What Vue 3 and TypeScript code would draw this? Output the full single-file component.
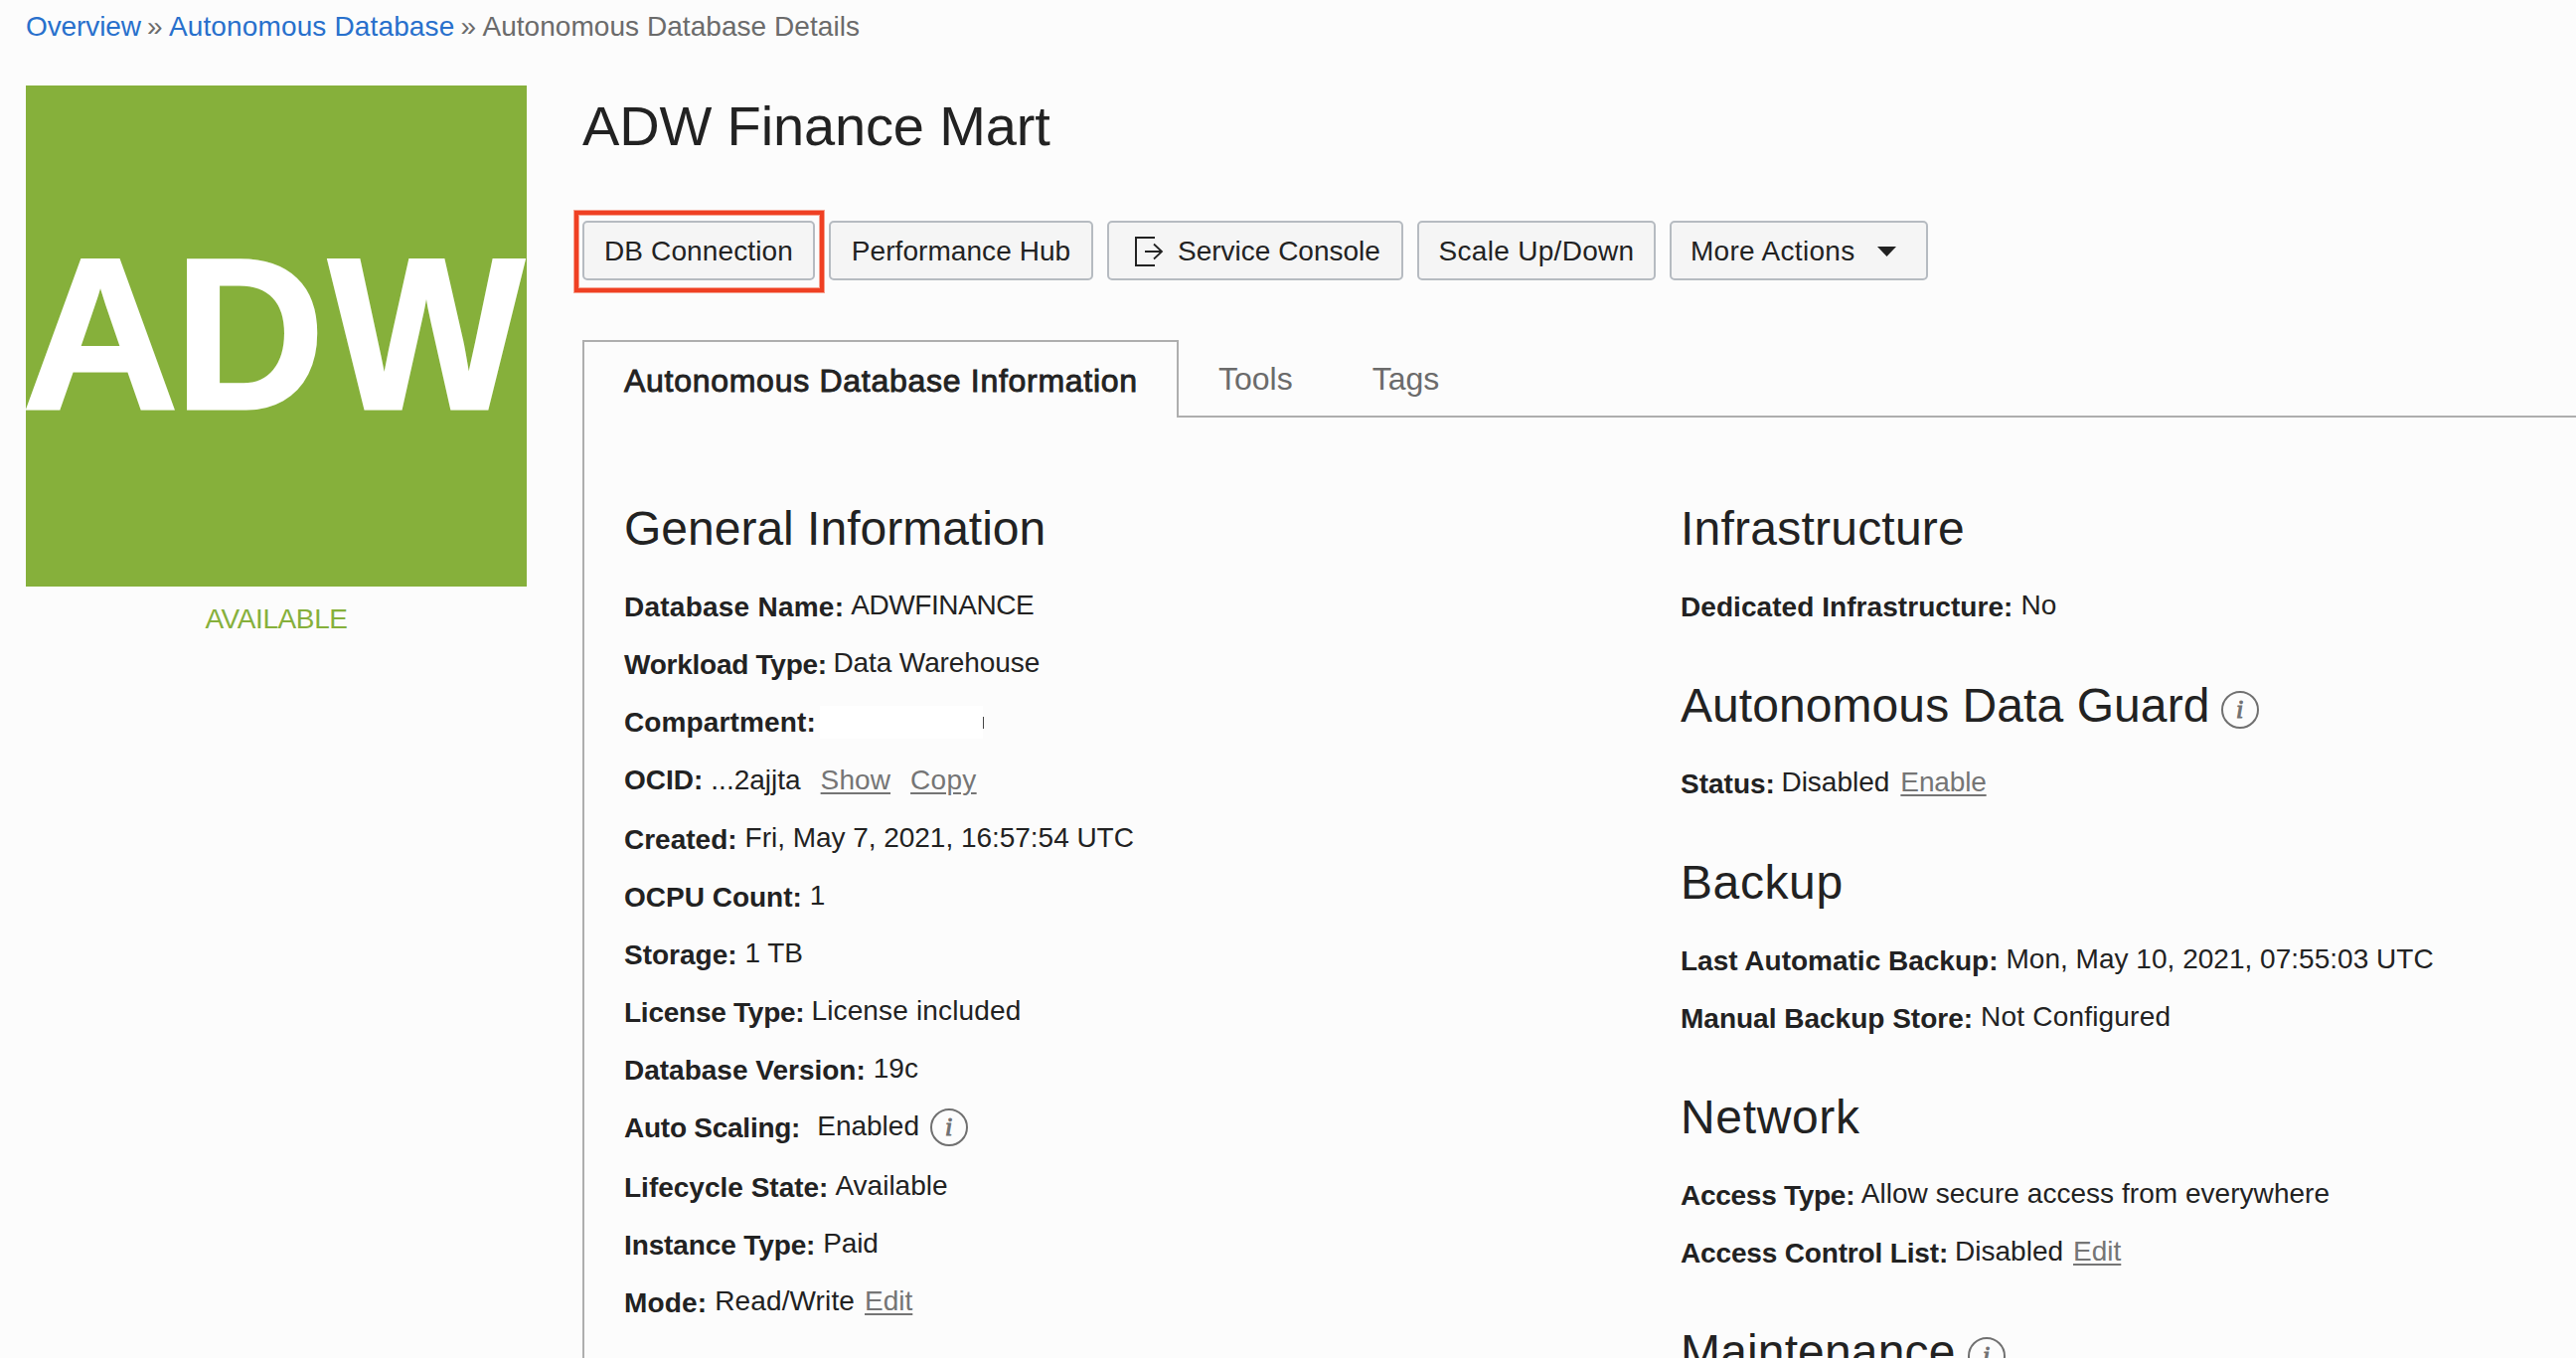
<script setup lang="ts">
interface Link {
  text: string
  gap: number
  ls?: number
}
interface Row {
  label: string
  value?: string
  labelLs?: number
  valueLs?: number
  gap?: number
  links?: Link[]
  info?: boolean
  tall?: boolean
  level?: boolean
  masked?: boolean
}
interface Section {
  title: string
  titleLs?: number
  info?: boolean
  rows: Row[]
}

const columns: Section[][] = [
  [
    {
      title: 'General Information',
      rows: [
        { label: 'Database Name:', labelLs: 0.24, value: 'ADWFINANCE', valueLs: -0.42, gap: 7 },
        { label: 'Workload Type:', labelLs: -0.25, value: 'Data Warehouse', valueLs: -0.1, gap: 6.5 },
        { label: 'Compartment:', labelLs: 0.13, masked: true },
        {
          label: 'OCID:',
          value: '...2ajjta',
          level: true,
          tall: true,
          links: [{ text: 'Show', gap: 20, ls: 0.1 }, { text: 'Copy', gap: 20, ls: 0.3 }],
        },
        { label: 'Created:', value: 'Fri, May 7, 2021, 16:57:54 UTC', valueLs: -0.03 },
        { label: 'OCPU Count:', value: '1' },
        { label: 'Storage:', value: '1 TB', valueLs: -0.1 },
        { label: 'License Type:', labelLs: -0.25, value: 'License included', valueLs: 0.15, gap: 7 },
        { label: 'Database Version:', value: '19c' },
        { label: 'Auto Scaling:', labelLs: -0.25, value: 'Enabled', gap: 17, info: true, tall: true },
        { label: 'Lifecycle State:', value: 'Available', gap: 7 },
        { label: 'Instance Type:', labelLs: -0.12, value: 'Paid', valueLs: -0.2 },
        { label: 'Mode:', labelLs: 0.15, value: 'Read/Write', valueLs: 0.13, links: [{ text: 'Edit', gap: 10 }] },
      ],
    },
  ],
  [
    {
      title: 'Infrastructure',
      titleLs: 0.23,
      rows: [{ label: 'Dedicated Infrastructure:', labelLs: 0.06, value: 'No' }],
    },
    {
      title: 'Autonomous Data Guard',
      titleLs: 0.07,
      info: true,
      rows: [{ label: 'Status:', value: 'Disabled', gap: 6.5, links: [{ text: 'Enable', gap: 11, ls: -0.15 }] }],
    },
    {
      title: 'Backup',
      titleLs: 0.6,
      rows: [
        { label: 'Last Automatic Backup:', value: 'Mon, May 10, 2021, 07:55:03 UTC', valueLs: 0.02 },
        { label: 'Manual Backup Store:', value: 'Not Configured', valueLs: 0.2 },
      ],
    },
    {
      title: 'Network',
      titleLs: 0.65,
      rows: [
        {
          label: 'Access Type:',
          labelLs: -0.27,
          value: 'Allow secure access from everywhere',
          valueLs: 0.04,
          gap: 6.5,
        },
        { label: 'Access Control List:', labelLs: -0.16, value: 'Disabled', gap: 7, links: [{ text: 'Edit', gap: 10 }] },
      ],
    },
    { title: 'Maintenance', titleLs: 0.15, info: true, rows: [] },
  ],
]

const px = (n?: number) => (n ? `${n}px` : undefined)
</script>

<template>
  <div class="page">
    <nav class="crumbs">
      <a class="c1">Overview</a><i>»</i><a class="c2">Autonomous Database</a><i>»</i><span>Autonomous Database Details</span>
    </nav>
    <div class="body">
      <aside class="side">
        <svg class="tile" viewBox="0 0 504 504" width="504" height="504">
          <text x="-3.5" y="325" textLength="157" lengthAdjust="spacingAndGlyphs">A</text>
          <text x="149.5" y="325" textLength="151" lengthAdjust="spacingAndGlyphs">D</text>
          <text x="304.5" y="325" textLength="197" lengthAdjust="spacingAndGlyphs">W</text>
        </svg>
        <div class="state">AVAILABLE</div>
      </aside>
      <main class="main">
        <h1>ADW Finance Mart</h1>
        <div class="actions">
          <button class="b1"><span>DB Connection</span></button>
          <button class="b2"><span>Performance Hub</span></button>
          <button class="b3">
            <svg width="30" height="30" viewBox="0 0 30 30" fill="none" stroke="#222" stroke-width="2">
              <path d="M20 1H1V29H20" /><path d="M10 15H27" /><path d="M19 7.5L27 15L19 22.5" stroke-width="1.8" />
            </svg>
            <span>Service Console</span>
          </button>
          <button class="b4"><span>Scale Up/Down</span></button>
          <button class="b5">
            <span>More Actions</span>
            <svg width="19" height="10" viewBox="0 0 19 10"><path d="M0 0H19L9.5 10Z" fill="#222" /></svg>
          </button>
        </div>
        <div class="tabs">
          <div class="tab active"><span>Autonomous Database Information</span></div>
          <div class="rest">
            <span class="tab tools">Tools</span>
            <span class="tab tags">Tags</span>
          </div>
        </div>
        <div class="panel">
          <div v-for="(col, c) in columns" :key="c" class="col">
            <section v-for="s in col" :key="s.title">
              <h2>
                <span :style="{ letterSpacing: px(s.titleLs) }">{{ s.title }}</span>
                <svg v-if="s.info" class="info" width="38" height="38" viewBox="0 0 38 38">
                  <circle cx="19" cy="19" r="18" /><text x="18.5" y="27" text-anchor="middle">i</text>
                </svg>
              </h2>
              <div v-for="r in s.rows" :key="r.label" class="row" :class="{ tall: r.tall, level: r.level }">
                <b :style="{ letterSpacing: px(r.labelLs) }">{{ r.label }}</b>
                <span v-if="r.masked" class="mask"></span>
                <span v-else class="val" :style="{ marginLeft: px(r.gap), letterSpacing: px(r.valueLs) }">{{ r.value }}</span>
                <a
                  v-for="l in r.links"
                  :key="l.text"
                  :style="{ marginLeft: px(l.gap), letterSpacing: px(l.ls) }"
                >{{ l.text }}</a>
                <svg v-if="r.info" class="info" width="38" height="38" viewBox="0 0 38 38">
                  <circle cx="19" cy="19" r="18" /><text x="18.5" y="27" text-anchor="middle">i</text>
                </svg>
              </div>
            </section>
          </div>
        </div>
      </main>
    </div>
  </div>
</template>

<style>
html, body { background: #fcfcfc; overflow: hidden; }
</style>
<style scoped>
.page {
  width: 2592px;
  height: 1366px;
  overflow: hidden;
  background: #fcfcfc;
  color: #222;
  font: 28px/32px "Liberation Sans", Arial, sans-serif;
  white-space: nowrap;
}
.crumbs { display: flex; height: 86px; padding: 11px 0 0 26px; box-sizing: border-box; color: #6b6b6b; letter-spacing: 0.05px; }
.crumbs a { color: #2870cc; }
.crumbs .c1 { letter-spacing: -0.1px; }
.crumbs .c2 { letter-spacing: 0.14px; }
.crumbs i { font-style: normal; width: 28px; text-align: center; }
.body { display: flex; }
.side { width: 504px; margin-left: 26px; flex: none; }
.tile { display: block; background: #86b03b; overflow: visible; }
.tile text { font: bold 217px "Liberation Sans", Arial, sans-serif; fill: #fff; stroke: #fff; stroke-width: 3; }
.state { color: #86b03b; text-align: center; margin-top: 17px; letter-spacing: -0.4px; }
.main { margin-left: 56px; flex: 1; }
h1 { font-size: 56px; font-weight: 400; line-height: 64px; margin: 9px 0 63px; height: 64px; letter-spacing: -0.15px; }
.actions { display: flex; height: 60px; }
button {
  box-sizing: border-box;
  height: 60px;
  padding: 0;
  border: 2px solid #b6bbc1;
  border-radius: 5px;
  background: #f5f5f5;
  color: #222;
  font: inherit;
  display: flex;
  align-items: center;
  justify-content: center;
  margin-right: 14px;
}
button span { padding-top: 2px; }
.b1 { width: 234px; position: relative; letter-spacing: 0.13px; }
.b1::after {
  content: "";
  position: absolute;
  left: -10px;
  top: -12px;
  width: 243px;
  height: 74px;
  border: 4px solid #ef4023;
  box-shadow: 0 0 0 1px #f6a08f, inset 0 0 0 1px #f6a08f;
}
.b2 { width: 266px; letter-spacing: 0.07px; }
.b3 { width: 298px; gap: 13px; justify-content: flex-start; padding-left: 26px; }
.b3 svg { margin-top: 2px; }
.b4 { width: 240px; letter-spacing: 0.3px; }
.b5 { width: 260px; justify-content: space-between; padding: 0 30px 0 19px; letter-spacing: 0.3px; }
.b5 svg { margin-top: 2px; }
.tabs { display: flex; margin-top: 60px; height: 78px; font-size: 32px; line-height: 36px; }
.tab.active {
  box-sizing: border-box;
  width: 600px;
  border: 2px solid #aeaeae;
  border-bottom: 0;
  padding: 21px 0 0 40px;
  letter-spacing: 0.72px;
  -webkit-text-stroke: 0.9px #222;
}
.rest { flex: 1; border-bottom: 2px solid #aeaeae; color: #6b6b6b; padding: 21px 0 0 40px; display: flex; }
.tags { margin-left: 80px; }
.panel { border-left: 2px solid #aeaeae; display: flex; height: 946px; padding: 85px 0 0 40px; box-sizing: border-box; }
.col { width: 1063px; flex: none; }
h2 { font-size: 48px; font-weight: 400; line-height: 54px; height: 54px; margin: 0 0 34px; display: flex; }
h2 .info { margin: 12px 0 0 12px; }
section { margin-bottom: 32px; }
.row { display: flex; height: 58px; }
.row.tall { height: 60px; }
.row b { position: relative; top: 2px; }
.row .val { margin-left: 8px; }
.row a { color: #757575; text-decoration: underline; text-decoration-thickness: 2px; text-underline-offset: 3px; }
.row.level .val, .row.level a { padding-top: 2px; }
.row .info { margin: -2px 0 0 11px; }
.info circle { fill: none; stroke: #707070; stroke-width: 2; }
.info text { font: italic 26px "Liberation Serif", serif; fill: #707070; stroke: #707070; stroke-width: 1; }
.mask { width: 164px; height: 33px; margin-left: 4px; margin-top: 1px; background: #fff; position: relative; }
.mask::after { content: ""; position: absolute; left: 164px; top: 11px; width: 1px; height: 12px; background: #444; }
</style>
